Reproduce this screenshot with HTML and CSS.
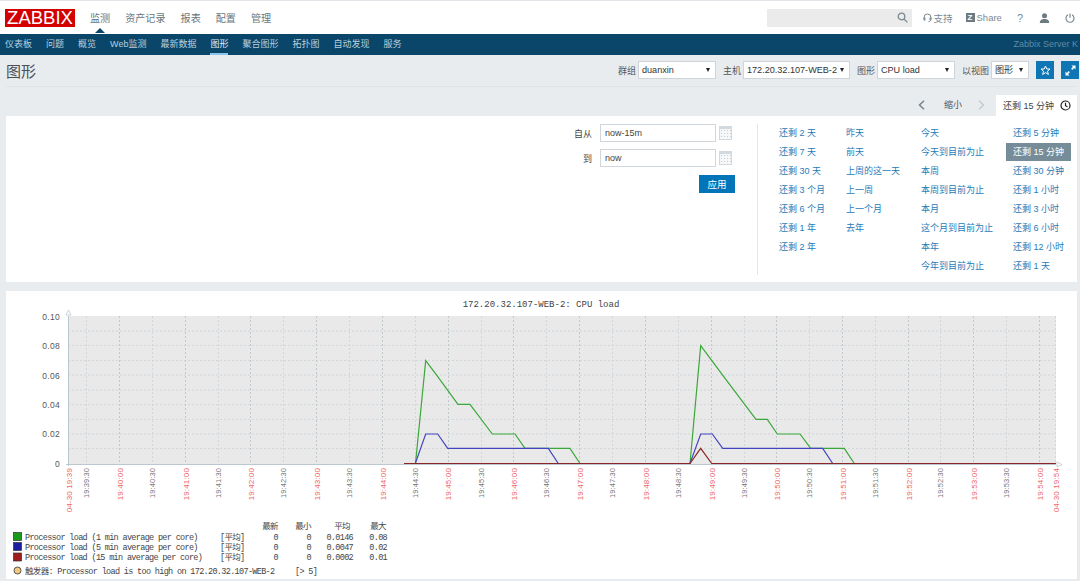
FILE: index.html
```html
<!DOCTYPE html>
<html lang="en">
<head>
    <meta charset="UTF-8">
    <meta name="viewport" content="width=device-width, initial-scale=1.0">
    <title>图形 - Zabbix</title>
    <link rel="stylesheet" href="styles.css">
</head>
<body>
    <header class="topbar">
        <div class="logo">ZABBIX</div>
        <nav class="main-nav">
            <a class="main-link active">监测</a>
            <a class="main-link">资产记录</a>
            <a class="main-link">报表</a>
            <a class="main-link">配置</a>
            <a class="main-link">管理</a>
        </nav>
        <div class="top-tools">
            <div class="search">
                <svg class="icon-search" width="11" height="11" viewBox="0 0 11 11"><circle cx="4.500" cy="4.500" r="3.300"/><path d="M7 7l3.400 3.400"/></svg>
            </div>
            <a class="tool support">
                <svg width="9" height="10" viewBox="0 0 9 10"><path d="M1 6V4.500a3.500 3.500 0 0 1 7 0V6M1 4.800h1v2.400H1zM7 4.800h1v2.400H7zM7.500 7.200c0 1-1 1.500-2 1.500"/></svg>
                支持
            </a>
            <a class="tool share"><span class="share-mark">Z</span>Share</a>
            <a class="tool help">?</a>
            <a class="tool user">
                <svg width="11" height="10" viewBox="0 0 11 10"><circle cx="5.500" cy="2.800" r="2.500"/><path d="M.8 10c0-3 2-4 4.700-4s4.700 1 4.700 4z"/></svg>
            </a>
            <a class="tool power">
                <svg width="10" height="10" viewBox="0 0 10 10"><path d="M3 1.800a4 4 0 1 0 4 0M5 .5v4.300"/></svg>
            </a>
        </div>
    </header>

    <nav class="sub-nav">
        <a class="sub-link">仪表板</a>
        <a class="sub-link">问题</a>
        <a class="sub-link">概览</a>
        <a class="sub-link">Web监测</a>
        <a class="sub-link">最新数据</a>
        <a class="sub-link active">图形</a>
        <a class="sub-link">聚合图形</a>
        <a class="sub-link">拓扑图</a>
        <a class="sub-link">自动发现</a>
        <a class="sub-link">服务</a>
        <span class="server-name">Zabbix Server K</span>
    </nav>

    <main class="content">
        <div class="page-head">
            <h1>图形</h1>
            <div class="controls">
                <span class="control-label">群组</span>
                <div class="select select-group">duanxin</div>
                <span class="control-label">主机</span>
                <div class="select select-host">172.20.32.107-WEB-2</div>
                <span class="control-label">图形</span>
                <div class="select select-graph">CPU load</div>
                <span class="control-label">以视图</span>
                <div class="select select-view">图形</div>
                <button class="icon-btn">
                    <svg width="11" height="11" viewBox="0 0 11 11"><path d="M5.500 1l1.300 3h3.200L7.500 6.200l.9 3.300-2.900-1.900-2.900 1.900.9-3.300L1 4h3.200z"/></svg>
                </button>
                <button class="icon-btn">
                    <svg width="11" height="11" viewBox="0 0 11 11"><path class="solid" d="M6.500 0.500h4v4l-1.400-1.400-1.800 1.800-1.200-1.200 1.800-1.800zM4.500 10.500h-4v-4l1.400 1.400 1.800-1.800 1.200 1.200-1.800 1.800z"/></svg>
                </button>
            </div>
        </div>

        <div class="time-row">
            <svg class="arrow" width="7" height="10" viewBox="0 0 7 10"><path d="M6 .8L1.500 5 6 9.200"/></svg>
            <span class="zoom-out">缩小</span>
            <svg class="arrow disabled" width="7" height="10" viewBox="0 0 7 10"><path d="M1 .8L5.500 5 1 9.200"/></svg>
            <div class="time-tab">
                还剩 15 分钟
                <svg width="11" height="11" viewBox="0 0 11 11"><circle cx="5.500" cy="5.500" r="4.500"/><path d="M5.500 2.800v2.900l2 1"/></svg>
            </div>
        </div>

        <section class="card filter">
            <form class="time-form">
                <div class="form-row">
                    <label>自从</label>
                    <input class="text-input" value="now-15m">
                    <span class="calendar"></span>
                </div>
                <div class="form-row">
                    <label>到</label>
                    <input class="text-input" value="now">
                    <span class="calendar"></span>
                </div>
                <button class="apply" type="button">应用</button>
            </form>
            <div class="ranges">
                <div class="range-col col-a">
                    <a>还剩 2 天</a>
                    <a>还剩 7 天</a>
                    <a>还剩 30 天</a>
                    <a>还剩 3 个月</a>
                    <a>还剩 6 个月</a>
                    <a>还剩 1 年</a>
                    <a>还剩 2 年</a>
                </div>
                <div class="range-col col-b">
                    <a>昨天</a>
                    <a>前天</a>
                    <a>上周的这一天</a>
                    <a>上一周</a>
                    <a>上一个月</a>
                    <a>去年</a>
                </div>
                <div class="range-col col-c">
                    <a>今天</a>
                    <a>今天到目前为止</a>
                    <a>本周</a>
                    <a>本周到目前为止</a>
                    <a>本月</a>
                    <a>这个月到目前为止</a>
                    <a>本年</a>
                    <a>今年到目前为止</a>
                </div>
                <div class="range-col col-d">
                    <a>还剩 5 分钟</a>
                    <a class="selected">还剩 15 分钟</a>
                    <a>还剩 30 分钟</a>
                    <a>还剩 1 小时</a>
                    <a>还剩 3 小时</a>
                    <a>还剩 6 小时</a>
                    <a>还剩 12 小时</a>
                    <a>还剩 1 天</a>
                </div>
            </div>
        </section>

        <section class="card graph">
            <svg class="chart" width="1071" height="288" viewBox="6 291 1071 288">
                <text class="chart-title" x="541" y="307" text-anchor="middle">172.20.32.107-WEB-2: CPU load</text>

                <rect class="plot" x="68" y="316" width="988" height="148"/>

                <!-- horizontal grid -->
                <path class="grid" d="M68 331H1056M68 345.500H1056M68 360.500H1056M68 375H1056M68 390H1056M68 404.500H1056M68 419.500H1056M68 434H1056M68 448.500H1056"/>
                <!-- half minute grid -->
                <path class="grid" d="M86.500 316V464M152.500 316V464M218.500 316V464M283.500 316V464M349.500 316V464M415.500 316V464M481.500 316V464M546.500 316V464M612.500 316V464M678.500 316V464M744.500 316V464M809.500 316V464M875.500 316V464M940.500 316V464M1006.500 316V464M1055.500 316V464"/>
                <!-- full minute grid -->
                <path class="grid strong" d="M119.500 316V464M185.500 316V464M250.500 316V464M316.500 316V464M382.500 316V464M448.500 316V464M513.500 316V464M579.500 316V464M645.500 316V464M711.500 316V464M776.500 316V464M842.500 316V464M908.500 316V464M973.500 316V464M1039.500 316V464"/>

                <path class="axis" d="M68.500 316V466M66 464.500H1056"/>
                <path class="axis-arrow" d="M68.500 310l2.500 5h-5zM1062 464.500l-5-2.500v5z"/>

                <polyline class="line green" points="404,463.500 415.500,463.500 425.700,360.700 437,375.700 458,404.300 470,404.300 492.300,434 515,434 525,448.300 570,448.300 580,463.500 690,463.500 700.700,345.700 723,375.700 756,419.300 767.300,419.300 777.300,434 800,434 810.700,448.300 844.300,448.300 854.300,463.500 1056,463.500"/>
                <polyline class="line blue" points="404,463.500 415.300,463.500 425.700,434 437.700,434 447.700,448.300 548.300,448.300 558.300,463.500 690,463.500 700.700,434 712.300,434 722.700,448.300 822.700,448.300 832.700,463.500 1056,463.500"/>
                <polyline class="line red" points="404,463.500 690,463.500 700.700,448.300 711.700,463.500 1056,463.500"/>

                <!-- y axis -->
                <g class="y-labels" text-anchor="end">
                    <text x="60" y="319.500">0.10</text>
                    <text x="60" y="349">0.08</text>
                    <text x="60" y="378.500">0.06</text>
                    <text x="60" y="408">0.04</text>
                    <text x="60" y="437">0.02</text>
                    <text x="60" y="466.500">0</text>
                </g>

                <!-- x axis -->
                <g class="x-labels" text-anchor="end">
                    <text class="major" transform="translate(72,468) rotate(-90)">04-30 19:39</text>
                    <text class="minor" transform="translate(89,468) rotate(-90)">19:39:30</text>
                    <text class="major" transform="translate(122.500,468) rotate(-90)">19:40:00</text>
                    <text class="minor" transform="translate(155,468) rotate(-90)">19:40:30</text>
                    <text class="major" transform="translate(188.500,468) rotate(-90)">19:41:00</text>
                    <text class="minor" transform="translate(221,468) rotate(-90)">19:41:30</text>
                    <text class="major" transform="translate(254,468) rotate(-90)">19:42:00</text>
                    <text class="minor" transform="translate(286,468) rotate(-90)">19:42:30</text>
                    <text class="major" transform="translate(319.500,468) rotate(-90)">19:43:00</text>
                    <text class="minor" transform="translate(352,468) rotate(-90)">19:43:30</text>
                    <text class="major" transform="translate(385.500,468) rotate(-90)">19:44:00</text>
                    <text class="minor" transform="translate(418,468) rotate(-90)">19:44:30</text>
                    <text class="major" transform="translate(451,468) rotate(-90)">19:45:00</text>
                    <text class="minor" transform="translate(484,468) rotate(-90)">19:45:30</text>
                    <text class="major" transform="translate(517,468) rotate(-90)">19:46:00</text>
                    <text class="minor" transform="translate(549,468) rotate(-90)">19:46:30</text>
                    <text class="major" transform="translate(582.500,468) rotate(-90)">19:47:00</text>
                    <text class="minor" transform="translate(615,468) rotate(-90)">19:47:30</text>
                    <text class="major" transform="translate(648.500,468) rotate(-90)">19:48:00</text>
                    <text class="minor" transform="translate(681,468) rotate(-90)">19:48:30</text>
                    <text class="major" transform="translate(714.500,468) rotate(-90)">19:49:00</text>
                    <text class="minor" transform="translate(747,468) rotate(-90)">19:49:30</text>
                    <text class="major" transform="translate(780,468) rotate(-90)">19:50:00</text>
                    <text class="minor" transform="translate(812,468) rotate(-90)">19:50:30</text>
                    <text class="major" transform="translate(845.500,468) rotate(-90)">19:51:00</text>
                    <text class="minor" transform="translate(878,468) rotate(-90)">19:51:30</text>
                    <text class="major" transform="translate(911.500,468) rotate(-90)">19:52:00</text>
                    <text class="minor" transform="translate(943,468) rotate(-90)">19:52:30</text>
                    <text class="major" transform="translate(976.500,468) rotate(-90)">19:53:00</text>
                    <text class="minor" transform="translate(1009,468) rotate(-90)">19:53:30</text>
                    <text class="major" transform="translate(1042.500,468) rotate(-90)">19:54:00</text>
                    <text class="major" transform="translate(1059,468) rotate(-90)">04-30 19:54</text>
                </g>

                <!-- legend -->
                <g class="legend">
                    <g text-anchor="middle">
                        <text x="270" y="528.500">最新</text>
                        <text x="303" y="528.500">最小</text>
                        <text x="342" y="528.500">平均</text>
                        <text x="378" y="528.500">最大</text>
                    </g>

                    <rect class="swatch" x="13.500" y="532.500" width="8" height="8" fill="#1a9a1a"/>
                    <rect class="swatch" x="13.500" y="542.500" width="8" height="8" fill="#1c1ca0"/>
                    <rect class="swatch" x="13.500" y="553" width="8" height="8" fill="#a01c1c"/>

                    <text x="25" y="539.500">Processor load (1 min average per core)</text>
                    <text x="25" y="549.500">Processor load (5 min average per core)</text>
                    <text x="25" y="560">Processor load (15 min average per core)</text>

                    <text x="220" y="539.500">[平均]</text>
                    <text x="220" y="549.500">[平均]</text>
                    <text x="220" y="560">[平均]</text>

                    <g text-anchor="end">
                        <text x="278" y="539.500">0</text>
                        <text x="311" y="539.500">0</text>
                        <text x="353" y="539.500">0.0146</text>
                        <text x="387" y="539.500">0.08</text>
                        <text x="278" y="549.500">0</text>
                        <text x="311" y="549.500">0</text>
                        <text x="353" y="549.500">0.0047</text>
                        <text x="387" y="549.500">0.02</text>
                        <text x="278" y="560">0</text>
                        <text x="311" y="560">0</text>
                        <text x="353" y="560">0.0002</text>
                        <text x="387" y="560">0.01</text>
                    </g>

                    <circle class="trigger-dot" cx="17.500" cy="570.500" r="3.500"/>
                    <text x="25" y="573.500">触发器: Processor load is too high on 172.20.32.107-WEB-2</text>
                    <text x="295" y="573.500">[&gt; 5]</text>
                </g>
            </svg>
        </section>
    </main>
</body>
</html>
```

FILE: styles.css
```css
* {
    margin: 0;
    padding: 0;
    box-sizing: border-box;
}

html, body {
    height: 100%;
    overflow: hidden;
}

body {
    font-family: 'Liberation Sans', 'Noto Sans CJK SC', sans-serif;
    font-size: 9px;
    color: #444;
    background: #e9ecef;
}

a {
    color: inherit;
    text-decoration: none;
}

/* top bar */
.topbar {
    height: 34px;
    display: flex;
    align-items: center;
    background: #fff;
    border-top: 1px solid #e0e3e7;
    padding: 0 0 0 5px;
}

.logo {
    width: 70px;
    height: 18px;
    background: #d40000;
    color: #fff;
    font-size: 18.500px;
    line-height: 18px;
    text-align: center;
}

.main-nav {
    display: flex;
    gap: 15px;
    margin-left: 15px;
}

.main-link {
    position: relative;
    font-size: 10.100px;
    color: #68757c;
}

.main-link.active::after {
    content: "";
    position: absolute;
    left: 5px;
    top: 18px;
    border: 5px solid transparent;
    border-top: 0;
    border-bottom-color: #0a466a;
}

.top-tools {
    display: flex;
    align-items: center;
    margin-left: auto;
    color: #7b8a93;
}

.search {
    width: 145px;
    height: 18px;
    background: #ebebeb;
    display: flex;
    align-items: center;
    justify-content: flex-end;
    padding-right: 4px;
}

.icon-search {
    fill: none;
    stroke: #7b8a93;
    stroke-width: 1.300;
}

.tool {
    display: flex;
    align-items: center;
    gap: 2px;
    font-size: 9.500px;
}

.support {
    margin-left: 11px;
}

.support svg {
    fill: none;
    stroke: #7b8a93;
}

.share {
    margin-left: 13px;
}

.share-mark {
    width: 9px;
    height: 9px;
    background: #6d7a82;
    color: #fff;
    font-size: 8px;
    font-weight: bold;
    line-height: 9px;
    text-align: center;
}

.help {
    margin-left: 15px;
    font-size: 11px;
}

.user {
    margin-left: 16px;
}

.user svg {
    fill: #6d7a82;
}

.power {
    margin-left: 15px;
    margin-right: 5px;
}

.power svg {
    fill: none;
    stroke: #7b8a93;
    stroke-width: 1.200;
}

/* second level menu */
.sub-nav {
    height: 21px;
    display: flex;
    align-items: stretch;
    gap: 14px;
    background: #0a466a;
    padding-left: 5px;
    color: #b9d0de;
    line-height: 21px;
}

.sub-link.active {
    color: #e4eef5;
    border-bottom: 2px solid #8cc3ea;
}

.server-name {
    margin-left: auto;
    margin-right: 2px;
    color: #5f8ba5;
}

/* page */
.content {
    padding: 0 3px 0 6px;
}

.page-head {
    height: 32px;
    display: flex;
    align-items: center;
    justify-content: space-between;
    border-bottom: 1px solid #e0e4e7;
}

h1 {
    font-size: 15px;
    font-weight: normal;
    color: #4a4f53;
}

.controls {
    display: flex;
    align-items: center;
    height: 18px;
    margin-bottom: 1px;
    margin-right: -2px;
}

.control-label {
    margin-right: 2px;
    color: #555;
}

.select {
    position: relative;
    height: 18px;
    line-height: 16px;
    border: 1px solid #cdd5da;
    background: #fff;
    padding-left: 3px;
    margin-right: 7px;
    color: #333;
    font-size: 9.100px;
    white-space: nowrap;
}

.select::after {
    content: "";
    position: absolute;
    right: 5px;
    top: 6px;
    border: 2.500px solid transparent;
    border-top: 4px solid #222;
    border-bottom: 0;
}

.select-group { width: 78px; }
.select-host { width: 107px; }
.select-graph { width: 78px; }
.select-view { width: 38px; }

.icon-btn {
    width: 18px;
    height: 18px;
    border: 0;
    background: #0f76b6;
    display: flex;
    align-items: center;
    justify-content: center;
    margin-right: 7px;
}

.icon-btn:last-child {
    margin-right: 0;
}

.icon-btn svg {
    fill: none;
    stroke: #fff;
}

.icon-btn .solid {
    fill: #fff;
    stroke: none;
}

.time-row {
    height: 29px;
    display: flex;
    align-items: flex-end;
    justify-content: flex-end;
}

.arrow {
    fill: none;
    stroke: #75838c;
    stroke-width: 1.500;
    margin-bottom: 6px;
}

.arrow.disabled {
    stroke: #c3cbd0;
    margin-left: 16px;
}

.zoom-out {
    height: 21px;
    line-height: 21px;
    margin-left: 19px;
    color: #555;
}

.time-tab {
    width: 81px;
    height: 21px;
    margin-left: 11px;
    background: #fff;
    display: flex;
    align-items: center;
    justify-content: space-between;
    padding: 0 6px 0 7px;
    color: #444;
}

.time-tab svg {
    fill: none;
    stroke: #222;
    stroke-width: 1.200;
}

.card {
    background: #fff;
}

/* time filter */
.filter {
    height: 166px;
    display: flex;
    padding-top: 8px;
}

.time-form {
    width: 751px;
    display: flex;
    flex-direction: column;
    align-items: flex-end;
    padding-right: 25px;
}

.form-row {
    height: 18px;
    display: flex;
    align-items: center;
    margin-bottom: 7px;
}

.form-row label {
    margin-right: 8px;
    color: #444;
}

.text-input {
    width: 116px;
    height: 18px;
    border: 1px solid #cfd7dc;
    padding-left: 4px;
    font-family: inherit;
    font-size: 9px;
    color: #444;
}

.calendar {
    width: 13px;
    height: 14px;
    margin-left: 3px;
    border: 1px solid #d3dadf;
    border-top-width: 3px;
    background: radial-gradient(circle, #c3ccd2 0.7px, #f5f7f8 0.8px) 0 0 / 3px 3px;
}

.form-row:last-of-type {
    margin-bottom: 8px;
}

.apply {
    width: 36px;
    height: 18px;
    border: 0;
    background: #0275b8;
    color: #fff;
    font-family: inherit;
    font-size: 9.500px;
    margin-right: -3px;
}

.ranges {
    height: 151px;
    display: flex;
    border-left: 1px solid #e5e8eb;
    padding-left: 21px;
}

.range-col {
    display: flex;
    flex-direction: column;
    align-items: flex-start;
}

.range-col a {
    height: 19px;
    line-height: 19px;
    color: #1f7bb8;
}

.col-a { width: 67px; }
.col-b { width: 75px; }
.col-c { width: 92px; }

.range-col .selected {
    background: #768d99;
    color: #fff;
    margin-left: -7px;
    margin-bottom: 1px;
    padding: 0 7px;
    height: 18px;
}

/* graph */
.graph {
    height: 288px;
    margin-top: 9px;
}

.chart {
    display: block;
}

.chart-title {
    font-family: 'Liberation Mono', 'Noto Sans CJK SC', monospace;
    font-size: 9px;
    fill: #444;
}

.plot {
    fill: #e9e9e9;
}

.grid {
    fill: none;
    stroke: #d0d6da;
    stroke-width: 1;
    stroke-dasharray: 2 2;
}

.grid.strong {
    stroke: #bfc9ce;
}

.axis {
    fill: none;
    stroke: #bcc8cf;
    stroke-width: 1;
}

.axis-arrow {
    fill: #fff;
    stroke: #bcc8cf;
    stroke-width: 0.800;
}

.line {
    fill: none;
    stroke-width: 1.200;
}

.green { stroke: #3aa83a; }
.blue { stroke: #4444c0; }
.red { stroke: #8c2525; }

.y-labels text {
    font-size: 8.500px;
    letter-spacing: 0.300px;
    fill: #555;
}

.x-labels .major {
    font-size: 8px;
    letter-spacing: 0.150px;
    fill: #ee6668;
}

.x-labels .minor {
    font-size: 7.500px;
    letter-spacing: 0.100px;
    fill: #777;
}

.legend text {
    font-family: 'Liberation Mono', 'Noto Sans CJK SC', monospace;
    font-size: 8.500px;
    letter-spacing: -0.670px;
    fill: #444;
}

.swatch {
    stroke: #333;
    stroke-width: 0.700;
}

.trigger-dot {
    fill: #f3c981;
    stroke: #333;
    stroke-width: 0.800;
}
```
